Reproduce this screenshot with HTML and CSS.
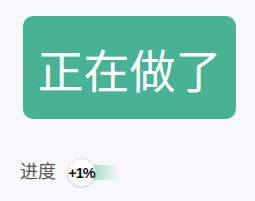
FILE: index.html
```html
<!DOCTYPE html>
<html lang="zh">
<head>
<meta charset="utf-8">
<link rel="stylesheet" href="styles.css">
</head>
<body>
<div class="page">
  <div class="status">正在做了</div>
  <div class="progress">
    <span class="label">进度</span>
    <div class="track">
      <div class="fill"></div>
      <div class="knob">+1%</div>
    </div>
  </div>
</div>
</body>
</html>
```
FILE: styles.css
```css
html, body {
  margin: 0;
  padding: 0;
  background: #f8f8fa;
}
.page {
  width: 255px;
  height: 201px;
  padding-top: 16px;
  box-sizing: border-box;
  font-family: "Noto Sans CJK SC", "Noto Sans", sans-serif;
}
.status {
  margin-left: 23px;
  width: 213px;
  height: 103px;
  border-radius: 10px;
  background: #47b394;
  color: #ffffff;
  font-size: 46px;
  font-weight: 400;
  display: flex;
  align-items: center;
  justify-content: center;
}
.progress {
  margin-top: 38px;
  padding-left: 20px;
  display: flex;
  align-items: center;
  height: 30px;
}
.label {
  font-size: 18px;
  color: #555555;
  line-height: 1;
  margin-top: -4px;
}
.track {
  position: relative;
  margin-left: 11px;
  width: 60px;
  height: 28px;
}
.fill {
  position: absolute;
  left: 14px;
  top: 7px;
  width: 38px;
  height: 15px;
  background: linear-gradient(to right, #6fcaa6 0%, #a9dfc8 35%, rgba(200, 235, 220, 0) 100%);
}
.knob {
  position: absolute;
  left: 0;
  top: 0;
  width: 27px;
  height: 27px;
  border-radius: 50%;
  background: #ffffff;
  border: 1px solid #dcdcdc;
  box-shadow: 0 1px 2px rgba(0, 0, 0, 0.12);
  display: flex;
  align-items: center;
  justify-content: center;
  font-family: "Liberation Sans", Arial, sans-serif;
  font-weight: bold;
  font-size: 14.5px;
  color: #111111;
  letter-spacing: -1px;
}
```
